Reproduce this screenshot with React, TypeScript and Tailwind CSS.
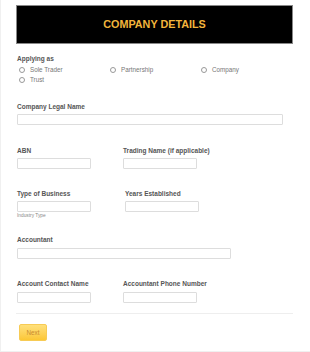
import React from "react";

const Label = ({ children, className = "" }: { children: React.ReactNode; className?: string }) => (
  <div className={`text-[6.5px] font-bold leading-[8px] text-[#555] ${className}`}>{children}</div>
);

const Input = ({ className = "" }: { className?: string }) => (
  <div className={`h-[11px] rounded-[1px] border border-[#ddd] bg-white ${className}`} />
);

const Radio = ({ label }: { label: string }) => (
  <label className="flex items-center gap-[5px] text-[6.3px] leading-[10px] text-[#777]">
    <span className="h-[6px] w-[6px] rounded-full border border-[#999]" />
    {label}
  </label>
);

export default function App() {
  return (
    <div
      className="h-[352px] w-[310px] overflow-hidden border-b border-l border-[#f0f0f0] bg-white"
      style={{ fontFamily: '"Liberation Sans", Arial, sans-serif' }}
    >
      <div className="pl-[15px] pt-[5px]">
        <div className="flex h-[39px] w-[277px] items-center justify-center border border-[#888] bg-black">
          <h1 className="text-[10.8px] font-bold text-[#f2b53c]">COMPANY DETAILS</h1>
        </div>

        <div className="pl-[1px]">
          <Label className="mt-[11px]">Applying as</Label>
          <div className="mt-[2px] grid w-[275px] grid-cols-3 pl-[2px]">
            <Radio label="Sole Trader" />
            <Radio label="Partnership" />
            <Radio label="Company" />
            <Radio label="Trust" />
          </div>

          <Label className="mt-[18px]">Company Legal Name</Label>
          <Input className="mt-[3px] w-[266px]" />

          <div className="mt-[22px] flex">
            <div className="w-[106px]">
              <Label>ABN</Label>
              <Input className="mt-[3px] w-[74px]" />
            </div>
            <div>
              <Label>Trading Name (if applicable)</Label>
              <Input className="mt-[3px] w-[74px]" />
            </div>
          </div>

          <div className="mt-[21px] flex">
            <div className="w-[108px]">
              <Label>Type of Business</Label>
              <Input className="mt-[3px] w-[74px]" />
              <div className="mt-[1px] text-[4.8px] leading-[6px] text-[#888]">Industry Type</div>
            </div>
            <div>
              <Label>Years Established</Label>
              <Input className="mt-[3px] w-[74px]" />
            </div>
          </div>

          <Label className="mt-[17px]">Accountant</Label>
          <Input className="mt-[4px] w-[214px]" />

          <div className="mt-[21px] flex">
            <div className="w-[106px]">
              <Label>Account Contact Name</Label>
              <Input className="mt-[4px] w-[74px]" />
            </div>
            <div>
              <Label>Accountant Phone Number</Label>
              <Input className="mt-[4px] w-[74px]" />
            </div>
          </div>
        </div>

        <div className="mt-[10px] h-px w-[277px] bg-[#eee]" />

        <button className="ml-[3px] mt-[10px] flex h-[17px] w-[28px] items-center justify-center rounded-[2px] border border-[#f7cb55] bg-gradient-to-b from-[#ffe07a] to-[#fcc733] text-[6.3px] text-[#c98a2e]">
          Next
        </button>
      </div>
    </div>
  );
}
